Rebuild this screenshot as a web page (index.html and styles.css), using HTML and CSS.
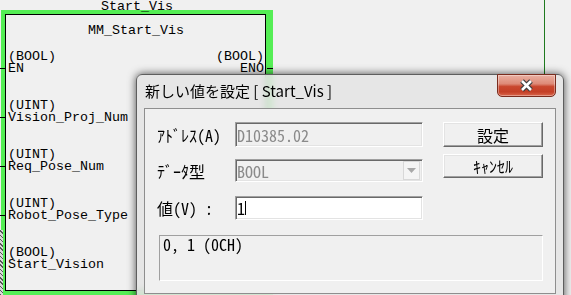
FILE: index.html
```html
<!DOCTYPE html>
<html lang="ja">
  <head>
    <meta charset="UTF-8" />
    <meta name="viewport" content="width=device-width, initial-scale=1.0" />
    <title>新しい値を設定</title>
    <link rel="stylesheet" href="styles.css">
  </head>
  <body>
    <div class="canvas">
      <div class="wire"></div>

      <!-- function block on the ladder canvas -->
      <div class="fb-block">
        <div class="fb-name">Start_Vis</div>
        <div class="fb-frame">
          <div class="fb">
            <div class="fb-title">MM_Start_Vis</div>

            <div class="pin-row">
              <div class="pin in">
                <span>(BOOL)</span>
                <span class="pin-name tick">EN</span>
              </div>
              <div class="pin out">
                <span>(BOOL)</span>
                <span class="pin-name tick">ENO</span>
              </div>
            </div>

            <div class="pin-row">
              <div class="pin in">
                <span>(UINT)</span>
                <span class="pin-name tick">Vision_Proj_Num</span>
              </div>
            </div>

            <div class="pin-row">
              <div class="pin in">
                <span>(UINT)</span>
                <span class="pin-name tick">Req_Pose_Num</span>
              </div>
            </div>

            <div class="pin-row">
              <div class="pin in">
                <span>(UINT)</span>
                <span class="pin-name tick">Robot_Pose_Type</span>
              </div>
            </div>

            <div class="pin-row">
              <div class="pin in">
                <span>(BOOL)</span>
                <span class="pin-name">Start_Vision</span>
              </div>
            </div>
          </div>
        </div>
      </div>
      <div class="hatch"></div>

      <!-- set value dialog -->
      <div class="dialog">
        <div class="titlebar">
          <span class="title">新しい値を設定 [ Start_Vis ]</span>
          <button class="close-btn" aria-label="閉じる">
            <svg width="17" height="15" viewBox="0 0 17 15">
              <path d="M4 3 L13 12 M13 3 L4 12" stroke="#3c3c3c" stroke-width="5" fill="none" />
              <path d="M4 3 L13 12 M13 3 L4 12" stroke="#ffffff" stroke-width="2.6" fill="none" />
            </svg>
          </button>
        </div>

        <div class="client">
          <div class="form">
            <div class="fields">
              <div class="row row-addr">
                <label>ｱﾄﾞﾚｽ(A)</label>
                <div class="field disabled">D10385.02</div>
              </div>
              <div class="row row-type">
                <label>ﾃﾞｰﾀ型</label>
                <div class="field combo disabled">
                  <span class="combo-text">BOOL</span>
                  <span class="combo-arrow">
                    <svg width="9" height="5" viewBox="0 0 9 5">
                      <path d="M0 0 L9 0 L4.5 5 Z" fill="#a8a8a8" />
                    </svg>
                  </span>
                </div>
              </div>
              <div class="row row-value">
                <label>値(V) :</label>
                <div class="field editable">1<span class="caret"></span></div>
              </div>
            </div>

            <div class="buttons">
              <button class="btn btn-ok">設定</button>
              <button class="btn btn-cancel">ｷｬﾝｾﾙ</button>
            </div>
          </div>

          <div class="info">0, 1 (0CH)</div>
        </div>
      </div>
    </div>
  </body>
</html>
```

FILE: styles.css
```css
:root {
  --bg: #f0f0f0;
  --hilite: #55ee55;
  --edge-dark: #a0a0a0;
  --edge-darker: #696969;
  --edge-light: #e3e3e3;
  --mono: "Liberation Mono", "DejaVu Sans Mono", monospace;
  --ui: "Noto Sans Mono CJK JP", "Noto Sans CJK JP", sans-serif;
}

* {
  margin: 0;
  padding: 0;
  box-sizing: border-box;
}

body {
  background-color: var(--bg);
  width: 571px;
  height: 295px;
  overflow: hidden;
}

.canvas {
  position: relative;
  width: 571px;
  height: 295px;
}

.wire {
  position: absolute;
  left: 544px;
  top: 0;
  width: 1px;
  height: 74px;
  background-color: #1f7a1f;
}

/* function block */

.fb-block {
  position: absolute;
  left: 1px;
  top: 1px;
  font-family: var(--mono);
  font-size: 13.33px;
  line-height: 12px;
  color: #000;
}

.fb-name {
  position: relative;
  z-index: 1;
  text-align: center;
  margin-bottom: -3px;
}

.fb-frame {
  border-style: solid;
  border-color: var(--hilite);
  border-width: 4px 7px 5px 4px;
}

.fb {
  width: 261px;
  height: 277px;
  border: 1px solid #000;
  padding: 10px 1px 0 2px;
}

.fb-title {
  text-align: center;
  margin-bottom: 14px;
}

.pin-row {
  display: flex;
  justify-content: space-between;
  margin-bottom: 25px;
}

.pin {
  display: flex;
  flex-direction: column;
}

.pin.out {
  align-items: flex-end;
}

.pin-name {
  position: relative;
}

.tick::before {
  content: "";
  position: absolute;
  left: -8px;
  top: 5px;
  width: 6px;
  height: 1px;
  background-color: #000;
}

.out .tick::before {
  left: auto;
  right: -9px;
}

.hatch {
  position: absolute;
  left: 0;
  top: 230px;
  width: 3px;
  height: 65px;
  background: repeating-linear-gradient(
    45deg,
    #555 0 1px,
    #d8d8d8 1px 3px
  );
}

/* dialog */

.dialog {
  position: absolute;
  left: 136px;
  top: 74px;
  width: 428px;
  height: 232px;
  border: 1px solid #5e5e5e;
  border-radius: 6px 6px 0 0;
  background-color: rgba(228, 228, 228, 0.86);
  backdrop-filter: blur(3px);
  box-shadow: 0 0 8px rgba(0, 0, 0, 0.7);
}

.titlebar {
  display: flex;
  align-items: flex-start;
  height: 33px;
  padding: 0 7px 0 8px;
}

.title {
  font-family: "Noto Sans CJK JP", sans-serif;
  font-size: 15px;
  line-height: 20px;
  margin-top: 6px;
  color: #000;
}

.close-btn {
  margin-left: auto;
  margin-top: -1px;
  width: 59px;
  height: 23px;
  display: flex;
  align-items: center;
  justify-content: center;
  border: 1px solid #7a2c1e;
  border-radius: 0 0 5px 5px;
  background: linear-gradient(
    to bottom,
    #eab0a2 0%,
    #de8a77 42%,
    #c9482f 55%,
    #c43f26 80%,
    #d9674c 100%
  );
  box-shadow: inset 0 0 0 1px rgba(255, 255, 255, 0.35);
}

.client {
  margin: 0 7px;
  height: 186px;
  border: 1px solid #8e8e8e;
  background-color: var(--bg);
  padding: 13px 12px;
  font-family: var(--ui);
  font-size: 16px;
  color: #000;
}

.form {
  display: flex;
  gap: 20px;
}

.fields {
  width: 266px;
}

.row {
  display: flex;
  align-items: center;
}

.row label {
  width: 78px;
  line-height: 18px;
}

.row-type {
  margin-top: 12px;
}

.row-value {
  margin-top: 14px;
}

.field {
  width: 188px;
  display: flex;
  align-items: center;
  padding: 0 1px;
  border: 1px solid;
  border-color: var(--edge-dark) #fff #fff var(--edge-dark);
  box-shadow: inset 1px 1px 0 var(--edge-darker), inset -1px -1px 0 var(--edge-light);
  line-height: 18px;
}

.row-addr .field {
  height: 25px;
}

.row-type .field {
  height: 23px;
}

.row-value .field {
  height: 24px;
}

.field.disabled {
  color: #8a8a8a;
  background-color: var(--bg);
}

.field.editable {
  background-color: #fff;
}

.caret {
  display: inline-block;
  width: 1px;
  height: 14px;
  margin-left: 0;
  background-color: #000;
}

.combo {
  padding-right: 2px;
}

.combo-text {
  flex: 1;
}

.combo-arrow {
  width: 17px;
  height: 19px;
  display: flex;
  align-items: center;
  justify-content: center;
  border: 1px solid #d8d8d8;
  background-color: #f4f4f4;
}

.buttons {
  display: flex;
  flex-direction: column;
  gap: 7px;
}

.btn {
  width: 100px;
  font-family: var(--ui);
  font-size: 16px;
  line-height: 18px;
  color: #000;
  background-color: var(--bg);
  border: 1px solid;
  border-color: #fff var(--edge-darker) var(--edge-darker) #fff;
  box-shadow: inset -1px -1px 0 var(--edge-dark), inset 1px 1px 0 var(--edge-light);
}

.btn-ok {
  height: 25px;
}

.btn-cancel {
  height: 24px;
}

.info {
  margin: 15px 0 0 2px;
  width: 384px;
  height: 46px;
  padding: 0 3px;
  line-height: 16px;
  border: 1px solid;
  border-color: var(--edge-dark) #fff #fff var(--edge-dark);
}
```
